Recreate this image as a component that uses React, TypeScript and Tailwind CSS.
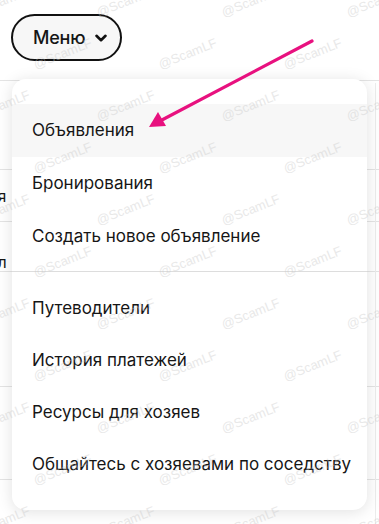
import React from 'react';

const menuTop = ['Объявления', 'Бронирования', 'Создать новое объявление'];
const menuBottom = ['Путеводители', 'История платежей', 'Ресурсы для хозяев', 'Общайтесь с хозяевами по соседству'];

// watermark positions, roughly following the repeated stamp in the picture
const marks: [number, number][] = [];
for (let r = 0; r < 11; r++) {
  for (let c = 0; c < 4; c++) {
    marks.push([-30 + c * 125 + (r % 2) * 62, -8 + r * 52]);
  }
}

export default function App() {
  return (
    <div className="relative w-[379px] h-[524px] overflow-hidden bg-white text-[#161616] font-['Inter','Noto_Sans',sans-serif]">
      {/* header */}
      <div className="h-[81px] border-b border-[#e4e4e4] pl-[11px] pt-[14px]">
        <button className="flex items-center h-[47px] w-[111px] pl-[20px] gap-[10px] rounded-full border-2 border-[#111] bg-[#f7f7f7] text-[18px] font-medium tracking-[-0.2px]">
          Меню
          <svg width="12" height="8" viewBox="0 0 12 8" fill="none">
            <path d="M1.5 1.8L6 6.2L10.5 1.8" stroke="#111" strokeWidth="2.6" strokeLinecap="round" strokeLinejoin="round" />
          </svg>
        </button>
      </div>

      {/* page content under the menu */}
      <div className="flex flex-col text-[16px]">
        <div className="h-[89px] border-b border-[#e4e4e4]" />
        <div className="h-[52px] border-b border-[#e4e4e4] flex items-center">
          <span className="-ml-[12px]">ия</span>
        </div>
        <div className="h-[50px] border-b border-[#e4e4e4] flex items-end pb-[1px]">
          <span className="-ml-[12px] leading-[16px]">ол</span>
        </div>
        <div className="h-[115px] border-b border-[#e4e4e4]" />
        <div className="h-[93px] border-b border-[#e4e4e4]" />
      </div>
      <div className="absolute right-[3px] top-[83px] bottom-0 w-px bg-[#ececec]" />

      {/* dropdown */}
      <div className="absolute left-[12px] top-[79px] w-[355px] rounded-[14px] bg-white shadow-[0_2px_16px_rgba(0,0,0,0.12)] pt-[25px] pb-[19px]">
        {menuTop.map((t, i) => (
          <div key={t} className={`h-[53px] flex items-center pl-[20px] text-[17px] ${i === 0 ? 'bg-[#f7f7f7]' : ''}`}>
            {t}
          </div>
        ))}
        <div className="h-px bg-[#dddddd] mt-[8px] mb-[11px]" />
        {menuBottom.map((t) => (
          <div key={t} className="h-[52px] flex items-center pl-[20px] text-[17px]">
            {t}
          </div>
        ))}
      </div>

      {/* watermark */}
      <div className="absolute inset-0 pointer-events-none">
        {marks.map(([x, y], i) => (
          <span
            key={i}
            className="absolute text-[13px] text-[#c8c8c8] opacity-40 -rotate-[22deg] font-['Liberation_Sans',sans-serif]"
            style={{ left: x, top: y }}
          >
            @ScamLF
          </span>
        ))}
      </div>

      {/* arrow */}
      <svg className="absolute left-0 top-0" width="379" height="524" viewBox="0 0 379 524" fill="none">
        <path d="M312 41L160 121" stroke="#e8117f" strokeWidth="3.2" strokeLinecap="round" />
        <path d="M149 127L158 112L166 126Z" fill="#e8117f" />
      </svg>
    </div>
  );
}
